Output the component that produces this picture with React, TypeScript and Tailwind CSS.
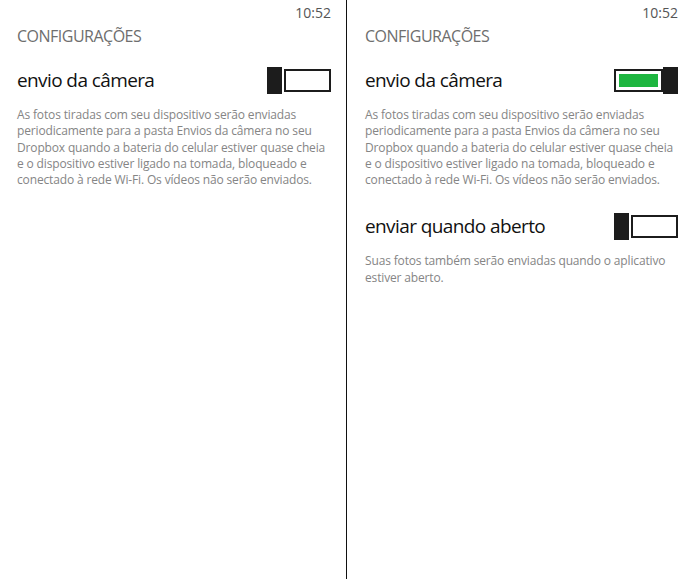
import React from "react";

const font = { fontFamily: '"Open Sans", "Noto Sans", sans-serif' };

function Toggle({ on }: { on: boolean }) {
  if (on) {
    return (
      <div className="flex h-[27px] w-[64px] shrink-0 items-center">
        <div className="flex h-[23px] w-[49px] items-stretch border-2 border-[#1c1c1c] bg-white p-[3px]">
          <div className="flex-1 bg-[#1eb640]" />
        </div>
        <div className="h-[27px] w-[15px] bg-[#1c1c1c]" />
      </div>
    );
  }
  return (
    <div className="flex h-[27px] w-[64px] shrink-0 items-center">
      <div className="h-[27px] w-[15px] bg-[#1c1c1c]" />
      <div className="ml-[2px] h-[23px] flex-1 border-2 border-[#1c1c1c] bg-white" />
    </div>
  );
}

function Setting({
  title,
  on,
  lines,
}: {
  title: string;
  on: boolean;
  lines: string[];
}) {
  return (
    <div>
      <div className="flex h-[30px] items-center justify-between">
        <span className="text-[19px] leading-[30px] tracking-[-0.6px] text-[#111]">{title}</span>
        <Toggle on={on} />
      </div>
      <p className="mt-[12px] text-[12px] leading-[16.3px] tracking-[-0.15px] text-[#858585]">
        {lines.map((l, i) => (
          <span key={i} className="block whitespace-nowrap">
            {l}
          </span>
        ))}
      </p>
    </div>
  );
}

const cameraLines = [
  "As fotos tiradas com seu dispositivo serão enviadas",
  "periodicamente para a pasta Envios da câmera no seu",
  "Dropbox quando a bateria do celular estiver quase cheia",
  "e o dispositivo estiver ligado na tomada, bloqueado e",
  "conectado à rede Wi-Fi. Os vídeos não serão enviados.",
];

function Screen({ showSecond, wide }: { showSecond: boolean; wide?: boolean }) {
  return (
    <div
      className={`${wide ? "w-[348px] pl-[18px] pr-[17px]" : "w-[346px] pl-[17px] pr-[15px]"} h-full bg-white pt-[3px]`}
    >
      <div className="text-right text-[14px] leading-[20px] text-[#555]">10:52</div>
      <div className="mt-[1px] text-[16px] leading-[24px] tracking-[-0.5px] text-[#6e6e6e]">
        CONFIGURAÇÕES
      </div>
      <div className="mt-[17px]">
        <Setting title="envio da câmera" on={showSecond} lines={cameraLines} />
      </div>
      {showSecond && (
        <div className="mt-[23px]">
          <Setting
            title="enviar quando aberto"
            on={false}
            lines={[
              "Suas fotos também serão enviadas quando o aplicativo",
              "estiver aberto.",
            ]}
          />
        </div>
      )}
    </div>
  );
}

export default function App() {
  return (
    <div className="flex h-[579px] w-[695px] overflow-hidden bg-white" style={font}>
      <Screen showSecond={false} />
      <div className="h-full w-[1px] shrink-0 bg-[#111]" />
      <Screen showSecond={true} wide />
    </div>
  );
}
